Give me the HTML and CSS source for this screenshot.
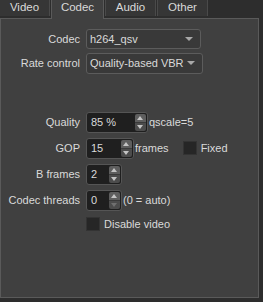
FILE: index.html
```html
<!DOCTYPE html>
<html lang="en">
<head>
  <meta charset="UTF-8" />
  <title>Codec settings</title>
  <link rel="stylesheet" href="styles.css">
</head>
<body>

  <div class="tabs">
    <div class="tab">Video</div>
    <div class="tab active">Codec</div>
    <div class="tab">Audio</div>
    <div class="tab">Other</div>
  </div>

  <div class="panel">
    <!-- codec selection -->
    <div class="row">
      <div class="label">Codec</div>
      <div class="combo codec-combo">h264_qsv<span class="arrow"></span></div>
    </div>
    <div class="row">
      <div class="label">Rate control</div>
      <div class="combo rate-combo">Quality-based VBR<span class="arrow"></span></div>
    </div>

    <!-- numeric settings -->
    <div class="row quality-row">
      <div class="label">Quality</div>
      <div class="spin w62">
        <span class="value">85 %</span>
        <span class="spin-btn"><span class="up"></span><span class="down"></span></span>
      </div>
      <span class="after">qscale=5</span>
    </div>
    <div class="row">
      <div class="label">GOP</div>
      <div class="spin w48">
        <span class="value">15</span>
        <span class="spin-btn"><span class="up"></span><span class="down"></span></span>
      </div>
      <span class="after">frames</span>
      <span class="check fixed-check"></span>
      <span class="check-text">Fixed</span>
    </div>
    <div class="row">
      <div class="label">B frames</div>
      <div class="spin w36">
        <span class="value">2</span>
        <span class="spin-btn"><span class="up"></span><span class="down"></span></span>
      </div>
    </div>
    <div class="row">
      <div class="label">Codec threads</div>
      <div class="spin w36">
        <span class="value">0</span>
        <span class="spin-btn"><span class="up"></span><span class="down disabled"></span></span>
      </div>
      <span class="after">(0 = auto)</span>
    </div>
    <div class="row disable-row">
      <div class="label"></div>
      <span class="check"></span>
      <span class="check-text">Disable video</span>
    </div>
  </div>

</body>
</html>
```

FILE: styles.css
```css
body {
  font-family: "Liberation Sans", Arial, sans-serif;
  font-size: 11px;
  margin: 0;
  background: #2d2d2d;
  color: #dadada;
}

.tabs {
  display: flex;
  align-items: flex-start;
  height: 18px;
  margin-left: -1px;
}

.tab {
  width: 49px;
  height: 16px;
  line-height: 15px;
  margin-right: 1px;
  text-align: center;
  background: #363636;
  border: 1px solid #4a4a4a;
  border-top: none;
  border-bottom: none;
  font-size: 11.5px;
}

.tab.active {
  width: 51px;
  height: 19px;
  line-height: 15px;
  background: #404040;
  border-color: #5a5a5a;
  position: relative;
  z-index: 1;
}

.panel {
  box-sizing: border-box;
  width: 259px;
  height: 280px;
  background: #404040;
  border: 1px solid #5a5a5a;
  padding-top: 10px;
}

.row {
  display: flex;
  align-items: center;
  height: 20px;
  margin-bottom: 6px;
}

.row:first-child {
  margin-bottom: 4px;
}

.quality-row {
  margin-top: 39px;
}

.disable-row {
  margin-top: -2px;
}

.label {
  width: 79px;
  text-align: right;
  margin-right: 6px;
  flex-shrink: 0;
}

.combo {
  box-sizing: border-box;
  height: 20px;
  line-height: 18px;
  padding-left: 3px;
  border: 1px solid #5c5c5c;
  border-radius: 3px;
  background: #393939;
  position: relative;
}

.codec-combo {
  width: 115px;
}

.rate-combo {
  width: 117px;
  height: 21px;
  line-height: 19px;
}

.arrow {
  position: absolute;
  right: 7px;
  top: 7px;
  border-left: 4px solid transparent;
  border-right: 4px solid transparent;
  border-top: 4px solid #a8a8a8;
}

.spin {
  box-sizing: border-box;
  height: 21px;
  border: 1px solid #555;
  border-radius: 3px;
  background: #1f1f1f;
  display: flex;
  align-items: center;
  justify-content: space-between;
}

.w62 { width: 62px; }
.w48 { width: 48px; }
.w36 { width: 36px; }

.value {
  padding-left: 4px;
}

.spin-btn {
  width: 11px;
  height: 17px;
  margin-right: 1px;
  border-radius: 2px;
  overflow: hidden;
  display: flex;
  flex-direction: column;
}

.spin-btn .up,
.spin-btn .down {
  flex: 1;
  position: relative;
}

.spin-btn .up {
  background: #5e5e5e;
}

.spin-btn .down {
  background: #4c4c4c;
  border-top: 1px solid #3a3a3a;
}

.spin-btn .up::after,
.spin-btn .down::after {
  content: "";
  position: absolute;
  left: 2px;
  border-left: 3.5px solid transparent;
  border-right: 3.5px solid transparent;
}

.spin-btn .up::after {
  top: 2px;
  border-bottom: 4px solid #c4c4c4;
}

.spin-btn .down::after {
  top: 2px;
  border-top: 4px solid #c4c4c4;
}

.spin-btn .down.disabled::after {
  border-top-color: #707070;
}

.after {
  margin-left: 1px;
}

.check {
  box-sizing: border-box;
  width: 14px;
  height: 14px;
  background: #262626;
  border: 1px solid #333;
  flex-shrink: 0;
}

.fixed-check {
  margin-left: 14px;
}

.check-text {
  margin-left: 4px;
}
```
